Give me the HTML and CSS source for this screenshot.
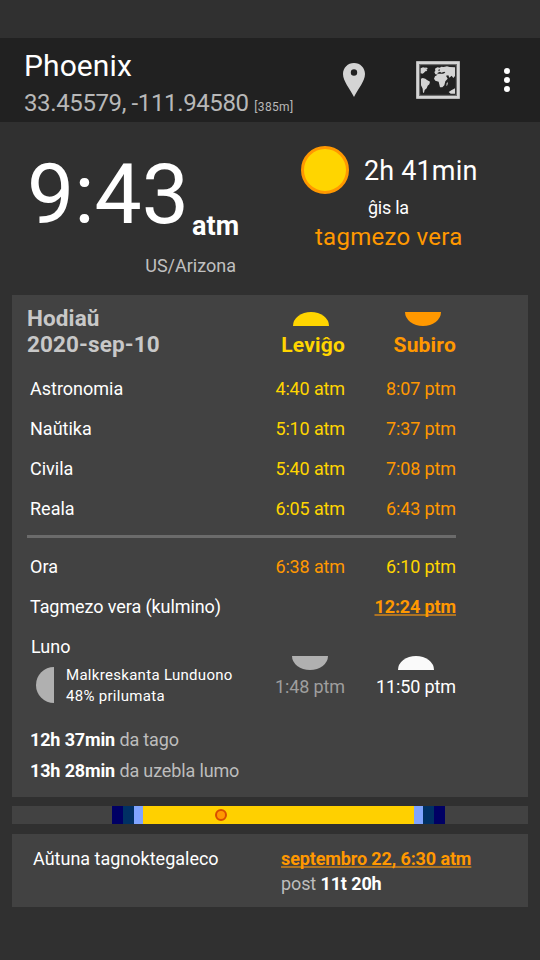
FILE: index.html
```html
<!DOCTYPE html>
<html lang="eo">
<head>
<meta charset="utf-8">
<title>Phoenix</title>
<link rel="stylesheet" href="styles.css">
</head>
<body>
<header class="bar">
  <div class="place">
    <div class="city"><span>Phoenix</span></div>
    <div class="coords"><span>33.45579, -111.94580</span> <small>[385m]</small></div>
  </div>
  <svg class="pin" viewBox="0 0 22 34"><path fill-rule="evenodd" d="M11 0C4.800 0 0 4.800 0 11c0 7 7 15 11 23 4-8 11-16 11-23C22 4.800 17.200 0 11 0zm0 6.300a3.200 3.200 0 1 1 0 6.400 3.200 3.200 0 0 1 0-6.400z"/></svg>
  <svg class="map" viewBox="0 0 132 114">
    <rect x="5" y="5" width="122" height="104" fill="none" stroke="#d4d4d4" stroke-width="9"/>
    <rect x="11" y="11" width="110" height="92" fill="none" stroke="#777" stroke-width="3"/>
    <path d="M14 22l7-3 6 1 7 10-6 1-4 4-4 3-6-1zM28 19l7 2-2 5-4-2zM15 53l5-2 8 2 5 4 9 5-2 8-5 4-3 8-6 5-2 8h-3l-1-12-5-10zM55 33l3-3-1-7 7-4 8 1 3-3 8 1 10-2 8 2 16 1v26l-5 6-5-7-7 6-3-7-7 1 5 9-7 8-3 12-6 6h-7l-4-17-10-3-4-6 3-7 8-5-7-1zM92 66l4-2-2 9-3 2zM98 93l8-5 11-6v16h-13z"/>
    <path class="sea" d="M64 36l8-4 4 3 9-3 3 3-7 3-16 0zM69 24l3 3-3 4-2-2z"/>
  </svg>
  <svg class="more" viewBox="0 0 6 24"><circle cx="3" cy="3" r="3"/><circle cx="3" cy="12" r="3"/><circle cx="3" cy="21" r="3"/></svg>
</header>

<section class="now">
  <div class="clock">
    <div class="time"><span class="digits">9:43</span><b>atm</b></div>
    <div class="zone">US/Arizona</div>
  </div>
  <div class="next">
    <div class="count"><i class="sun"></i><span>2h 41min</span></div>
    <div class="until">ĝis la</div>
    <div class="event">tagmezo vera</div>
  </div>
</section>

<main class="card">
  <div class="head">
    <h1>Hodiaŭ<br><span>2020-sep-10</span></h1>
    <div class="col rise"><i class="half up"></i><b>Leviĝo</b></div>
    <div class="col set"><i class="half down"></i><b>Subiro</b></div>
  </div>
  <div class="row"><span>Astronomia</span><span class="rise">4:40 atm</span><span class="set">8:07 ptm</span></div>
  <div class="row"><span>Naŭtika</span><span class="rise">5:10 atm</span><span class="set">7:37 ptm</span></div>
  <div class="row"><span>Civila</span><span class="rise">5:40 atm</span><span class="set">7:08 ptm</span></div>
  <div class="row"><span>Reala</span><span class="rise">6:05 atm</span><span class="set">6:43 ptm</span></div>
  <hr>
  <div class="row"><span>Ora</span><span class="set">6:38 atm</span><span class="rise">6:10 ptm</span></div>
  <div class="row"><span class="wide">Tagmezo vera (kulmino)</span><b class="set link">12:24 ptm</b></div>
  <div class="moon">
    <div class="phase">
      <div class="luno">Luno</div>
      <div class="detail"><i class="disc"></i><div>Malkreskanta Lunduono<br>48% prilumata</div></div>
    </div>
    <div class="col dim"><i class="half down"></i><span>1:48 ptm</span></div>
    <div class="col lit"><i class="half up"></i><span>11:50 ptm</span></div>
  </div>
  <div class="length"><b>12h 37min</b> da tago</div>
  <div class="length"><b>13h 28min</b> da uzebla lumo</div>
</main>

<div class="daybar">
  <i class="astro"></i><i class="naut"></i><i class="civil"></i>
  <i class="day"><i class="dot"></i></i>
  <i class="civil"></i><i class="naut"></i><i class="astro"></i>
</div>

<section class="season">
  <div>Aŭtuna tagnoktegaleco</div>
  <div class="when"><b class="set link">septembro 22, 6:30 atm</b><br><span>post</span> <b>11t 20h</b></div>
</section>
</body>
</html>
```
FILE: styles.css
```css
* { box-sizing: border-box; }
body {
  margin: 0;
  padding-top: 38px;
  height: 960px;
  overflow: hidden;
  background: #303030;
  color: #fff;
  font: 18px/24px Roboto, "Liberation Sans", sans-serif;
  white-space: nowrap;
}
i { display: block; font-style: normal; }
svg { display: block; flex: none; }

.bar { display: flex; height: 84px; padding-left: 24px; background: #212121; }
.place { width: 319px; }
.city { height: 46px; padding-top: 10px; font-size: 30px; line-height: 36px; letter-spacing: 0.1px; }
.coords { font-size: 24px; line-height: 38px; color: #b8b8b8; letter-spacing: -0.38px; }
.coords small { font-size: 12px; letter-spacing: 0.35px; }
.pin { width: 22px; height: 34px; margin-top: 25px; fill: #d4d4d4; }
.map { width: 44px; height: 38px; margin: 23px 0 0 51px; fill: #d4d4d4; }
.map .sea { fill: #212121; }
.more { width: 6px; height: 24px; margin: 30px 0 0 44px; fill: #fff; }

.now { display: flex; height: 173px; }
.clock { width: 301px; padding: 22px 0 0 27px; }
.time { display: flex; height: 100px; }
.digits { width: 165px; font-size: 84px; line-height: 102px; }
.time b { font-size: 27px; line-height: 32px; padding-top: 66px; letter-spacing: 0.1px; }
.zone { width: 209px; text-align: right; line-height: 24px; padding-top: 10px; color: #c0c0c0; }
.next { padding-top: 24px; }
.count { display: flex; gap: 15px; font-size: 27px; line-height: 51px; height: 50px; letter-spacing: 0.15px; }
.sun { width: 48px; height: 48px; border: 3px solid #ff9800; border-radius: 50%; background: #ffd500; }
.until { padding-left: 67px; line-height: 24px; letter-spacing: -0.25px; }
.event { padding-left: 14px; font-size: 24px; line-height: 34px; color: #ff9800; letter-spacing: 0.25px; }

.card { height: 502px; margin: 0 12px; padding: 10px 72px 0 15px; background: #424242; }
.rise { color: #ffd500; }
.set { color: #ff9800; }
.head { display: grid; grid-template-columns: 1fr 111px 111px; height: 64px; }
h1 { margin: 0; font-size: 22.5px; line-height: 26px; color: #c8c8c8; letter-spacing: 0.12px; }
.col { display: flex; flex-direction: column; align-items: flex-end; }
.head b { font-size: 21px; line-height: 24px; margin-top: 7px; letter-spacing: 0.2px; }
.half { width: 36px; height: 14px; background: currentColor; margin: 7px 15px 0 0; }
.up { border-radius: 18px 18px 0 0 / 14px 14px 0 0; }
.down { border-radius: 0 0 18px 18px / 0 0 14px 14px; }
.head .rise .half { margin-right: 16px; }
.row { display: grid; grid-template-columns: 1fr 111px 111px; line-height: 40px; padding-left: 3px; }
.row > :nth-child(n+2) { text-align: right; letter-spacing: -0.13px; }
.row .wide { grid-column: span 2; letter-spacing: -0.09px; }
.link { text-decoration: underline 2px #ad7323; text-underline-offset: 1px; text-decoration-skip-ink: none; }
hr { width: 429px; height: 3px; margin: 6px 0 9px; border: 0; background: #6b6b6b; }
.moon { display: grid; grid-template-columns: 1fr 111px 111px; height: 97px; }
.luno { padding-left: 4px; line-height: 40px; }
.detail { display: flex; gap: 12px; padding-left: 9px; font-size: 15px; line-height: 21px; margin-top: -2px; letter-spacing: 0.3px; }
.disc { width: 18px; height: 36px; margin-top: 2px; border-radius: 18px 0 0 18px; background: #b0b0b0; }
.moon .half { margin: 29px 17px 0 0; flex: none; }
.moon .lit .half { margin-right: 22px; }
.moon .col { line-height: 34px; letter-spacing: -0.13px; }
.dim { color: #9e9e9e; }
.dim .half { background: #b0b0b0; }
.lit .half { background: #fafafa; }
.length { padding-left: 3px; line-height: 31px; color: #bdbdbd; letter-spacing: -0.14px; }
.length b { color: #fff; }

.daybar { display: flex; height: 18px; margin: 9px 12px 10px; padding-left: 100px; background: #424242; }
.astro { width: 11px; background: #000064; }
.naut { width: 11px; background: #003064; }
.civil { width: 9px; background: #80a4ff; }
.day { width: 271px; background: #ffd000; }
.dot { width: 12px; height: 12px; margin: 3px 0 0 72px; border: 2px solid #d84e00; border-radius: 50%; background: #ff9800; }

.season { display: flex; height: 73px; margin: 0 12px; padding: 12px 0 0 21px; background: #424242; line-height: 25px; }
.season > :first-child { width: 248px; }
.when { letter-spacing: -0.12px; }
.when span { color: #bdbdbd; }
```
